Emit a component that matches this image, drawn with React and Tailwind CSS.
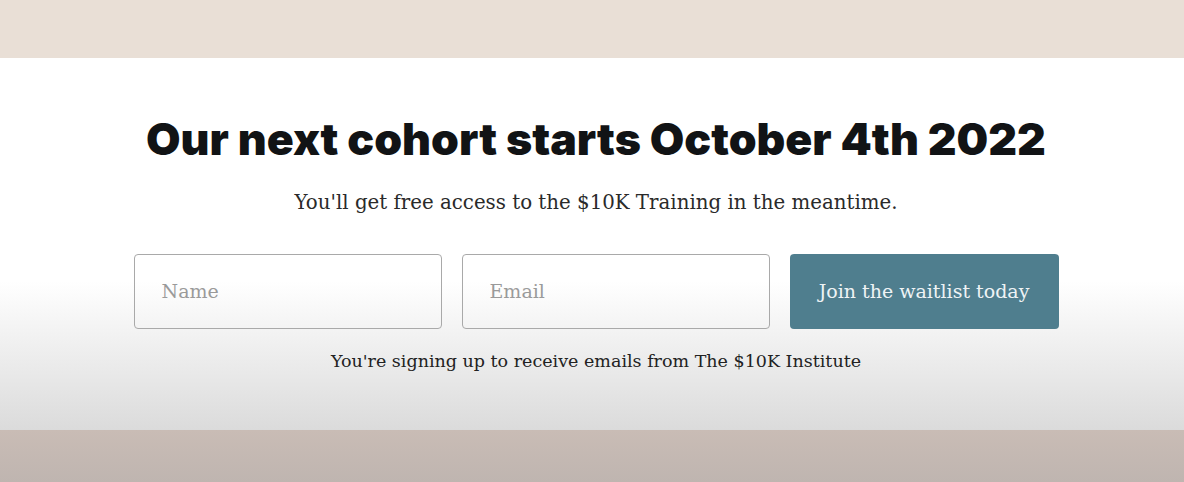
export default function App() {
  return (
    <div className="w-[1184px] h-[482px] flex flex-col overflow-hidden">
      <div className="h-[58px] bg-[#e9dfd6]" />
      <div className="h-[372px] bg-[linear-gradient(to_bottom,#ffffff_60%,#dbdbdb)] flex flex-col items-center pl-[8px] font-['DejaVu_Serif','Liberation_Serif',serif]">
        <h1 className="mt-[55px] text-[44.6px] leading-[52px] font-black text-[#111315] tracking-normal font-['Inter',sans-serif]">
          Our next cohort starts October 4th 2022
        </h1>
        <p className="mt-[25px] text-[19.8px] leading-[26px] text-[#2a2a2a]">
          You'll get free access to the $10K Training in the meantime.
        </p>
        <div className="mt-[38px] flex gap-[20px]">
          <div className="w-[308px] h-[75px] border border-[#a9a9a9] rounded-[4px] flex items-center pl-[27px] text-[19px] text-[#9a9a9a]">Name</div>
          <div className="w-[308px] h-[75px] border border-[#a9a9a9] rounded-[4px] flex items-center pl-[27px] text-[19px] text-[#9a9a9a]">Email</div>
          <div className="w-[269px] h-[75px] bg-[#4f7e8e] rounded-[4px] flex items-center justify-center text-[19px] text-[#eef3f5]">Join the waitlist today</div>
        </div>
        <p className="mt-[20px] text-[17.5px] leading-[24px] text-[#222]">
          You're signing up to receive emails from The $10K Institute
        </p>
      </div>
      <div className="h-[52px] bg-gradient-to-b from-[#c9bcb5] to-[#bfb5b0]" />
    </div>
  );
}
